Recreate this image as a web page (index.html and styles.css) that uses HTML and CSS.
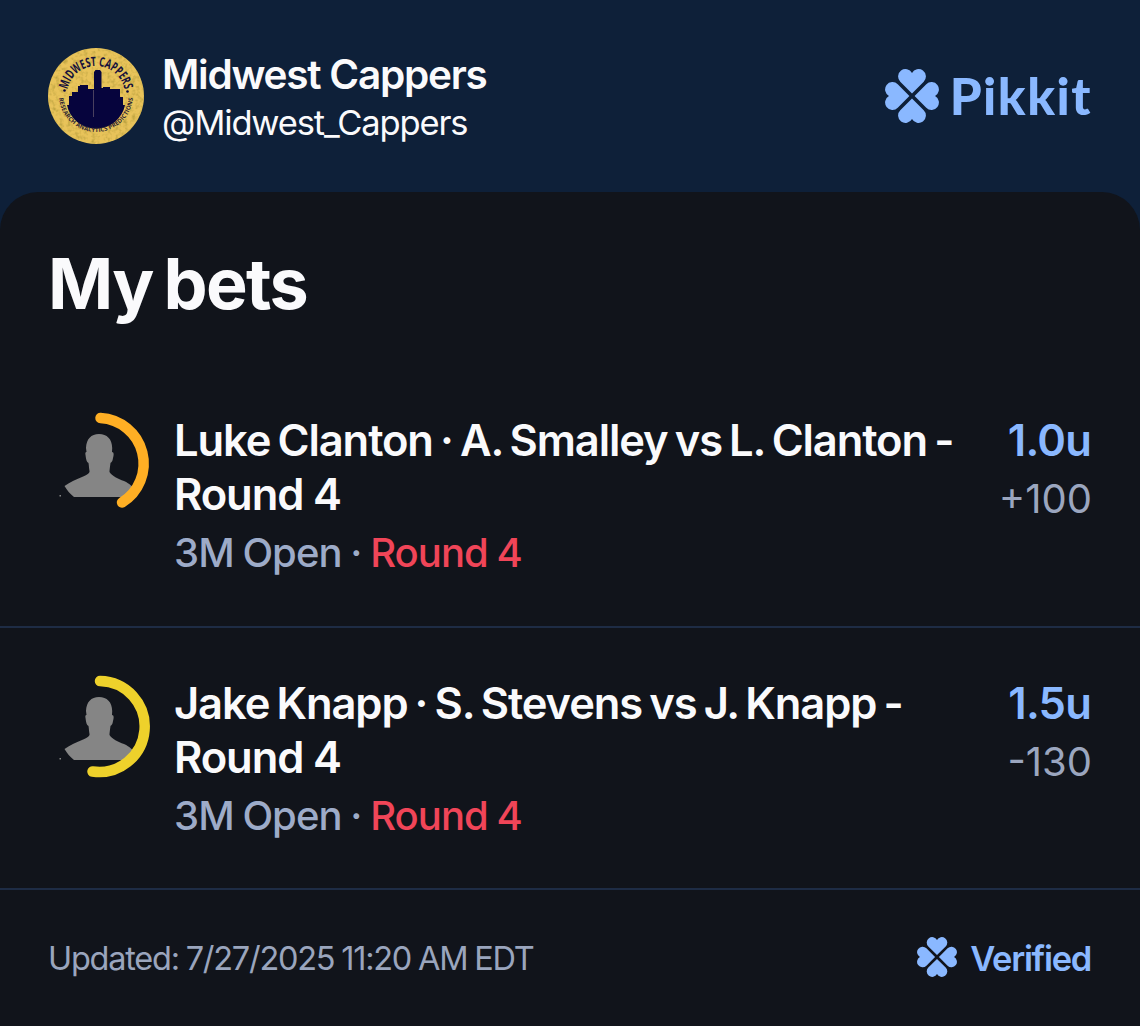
FILE: index.html
```html
<!DOCTYPE html>
<html lang="en">
<head>
    <meta charset="UTF-8">
    <meta name="viewport" content="width=device-width, initial-scale=1.0">
    <title>My bets</title>
    <link rel="stylesheet" href="styles.css">
</head>
<body>
    <!-- Shared shapes -->
    <svg class="defs" width="0" height="0">
        <symbol id="clover" viewBox="-27 -27 54 54">
            <g id="leaves">
                <path id="leaf" d="M0 -2.6L11.73 -14.27A7.4 7.4 0 1 0 0 -23.04A7.4 7.4 0 1 0 -11.73 -14.27Z"/>
                <use href="#leaf" transform="rotate(90)"/>
                <use href="#leaf" transform="rotate(180)"/>
                <use href="#leaf" transform="rotate(270)"/>
            </g>
        </symbol>
        <symbol id="person" viewBox="0 0 104 104">
            <path d="M49 22C57 22 62 27 62.200 36L62 40C64 40 64 43 63 46C62.500 50 61 50.500 60.500 51C60 55 59.500 58 59.500 60C62 64 68 67 74 69C80 72 83 75 85 77C82 81 78 84 76 85H24C20 82 17 78 14.500 74C20 70 27 67 32 65C37 63 40 61 39.500 59C39 57 39 54 38.500 51C36.500 50 36 47 35.500 43C35 40 36 40 36.500 40L36 36C36.500 27 41 22 49 22Z"/>
            <rect x="9.500" y="83" width="1.500" height="1.500"/>
        </symbol>
    </svg>

    <div class="header">
        <svg class="avatar" viewBox="0 0 96 96">
            <defs>
                <filter id="grain" x="0" y="0" width="100%" height="100%">
                    <feTurbulence type="fractalNoise" baseFrequency="0.25" numOctaves="3" seed="4"/>
                    <feColorMatrix values="0 0 0 0 0.5  0 0 0 0 0.36  0 0 0 0 0.05  2.2 0 0 0 -1"/>
                    <feComposite in2="SourceGraphic" operator="in"/>
                </filter>
                <path id="arcTop" d="M19 47A28.500 28.500 0 0 1 77 47"/>
                <path id="arcBottom" d="M11 47A37 37 0 0 0 85 47"/>
            </defs>
            <circle cx="48" cy="48" r="48" fill="#e8c35a"/>
            <circle cx="48" cy="48" r="48" filter="url(#grain)"/>
            <path class="skyline" d="M19 57H21V48H24V44H30V38H32V37H40V41H46V24L47.500 22H52L53.500 24V40H55V39H62V41H72V49H75V57H77A29.500 29 0 0 1 19 57Z"/>
            <path d="M45.500 42V69" stroke="#5a5068" stroke-width="0.800"/>
            <circle class="skyline" cx="16.500" cy="42.500" r="1.300"/>
            <circle class="skyline" cx="79.500" cy="43.500" r="1.300"/>
            <text class="coin-name"><textPath href="#arcTop" startOffset="50%" text-anchor="middle" textLength="80" lengthAdjust="spacingAndGlyphs">MIDWEST CAPPERS</textPath></text>
            <text class="coin-motto"><textPath href="#arcBottom" startOffset="50%" text-anchor="middle" textLength="110">RESEARCH ANALYTICS PREDICTIONS</textPath></text>
        </svg>
        <div class="user">
            <div class="user-name">Midwest Cappers</div>
            <div class="user-handle">@Midwest_Cappers</div>
        </div>
        <div class="brand">
            <svg class="brand-icon"><use href="#clover"/></svg>
            <span class="brand-name">Pikkit</span>
        </div>
    </div>

    <div class="card">
        <h1>My bets</h1>

        <div class="bet">
            <svg class="player" viewBox="0 0 104 104">
                <use href="#person"/>
                <path class="ring orange" d="M50.500 6A45.700 45.700 0 0 1 72 90.500"/>
            </svg>
            <div class="bet-info">
                <div class="bet-title"><span class="pick">Luke Clanton · A. Smalley vs L. Clanton -</span><br>Round 4</div>
                <div class="bet-event">3M Open · <span class="round">Round 4</span></div>
            </div>
            <div class="bet-stake">
                <div class="units">1.0u</div>
                <div class="odds">+100</div>
            </div>
        </div>

        <div class="bet last">
            <svg class="player" viewBox="0 0 104 104">
                <use href="#person"/>
                <path class="ring yellow" d="M50 6A45.500 45.500 0 1 1 42.500 96.500"/>
            </svg>
            <div class="bet-info">
                <div class="bet-title"><span class="pick">Jake Knapp · S. Stevens vs J. Knapp -</span><br>Round 4</div>
                <div class="bet-event">3M Open · <span class="round">Round 4</span></div>
            </div>
            <div class="bet-stake">
                <div class="units">1.5u</div>
                <div class="odds">-130</div>
            </div>
        </div>

        <div class="footer">
            <div class="updated">Updated: 7/27/2025 11:20 AM EDT</div>
            <div class="verified">
                <svg class="verified-icon"><use href="#clover"/></svg>
                <span>Verified</span>
            </div>
        </div>
    </div>
</body>
</html>
```
FILE: styles.css
```css
* {
    box-sizing: border-box;
}
body {
    font-family: Inter, 'Liberation Sans', sans-serif;
    background-color: #0e2039;
    color: #fafafc;
    margin: 0;
    height: 1026px;
    display: flex;
    flex-direction: column;
    white-space: nowrap;
    overflow: hidden;
}
svg {
    display: block;
    flex-shrink: 0;
}
.defs {
    position: absolute;
}
.header {
    display: flex;
    flex-shrink: 0;
    height: 192px;
    padding: 48px 49px 0 48px;
}
.avatar {
    width: 96px;
    height: 96px;
}
.skyline {
    fill: #06043d;
}
.coin-name {
    font-family: 'Open Sans', sans-serif;
    font-size: 13px;
    font-weight: 700;
    fill: #14103c;
}
.coin-motto {
    font-family: 'Open Sans', sans-serif;
    font-size: 6px;
    font-weight: 700;
    fill: #2d2433;
}
.user {
    margin-left: 18px;
    padding-top: 2px;
}
.user-name {
    font-size: 40.500px;
    line-height: 50px;
    font-weight: 600;
    letter-spacing: -1.250px;
}
.user-handle {
    font-size: 34.500px;
    line-height: 45px;
    letter-spacing: -1.150px;
}
.brand {
    display: flex;
    margin-left: auto;
    height: 96px;
    align-items: center;
    color: #8ab8ff;
}
.brand-icon {
    width: 54px;
    height: 54px;
    margin-top: -1px;
    fill: #8ab8ff;
}
.brand-name {
    font-family: Lato, sans-serif;
    font-size: 51px;
    line-height: 60px;
    font-weight: 900;
    letter-spacing: 1.500px;
    margin-left: 11px;
    margin-right: -1px;
}
.card {
    flex: 1;
    background-color: #11141b;
    border-radius: 38px 38px 0 0;
}
h1 {
    margin: 0;
    height: 173px;
    padding: 47px 48px 0;
    font-size: 70px;
    line-height: 90px;
    font-weight: 700;
    letter-spacing: -1.700px;
    word-spacing: -4px;
}
.bet {
    display: flex;
    height: 263px;
    padding: 48px 49px 0 50px;
    border-bottom: 2px solid #1e2c45;
}
.last {
    height: 262px;
}
.player {
    width: 104px;
    height: 104px;
    margin-top: -1px;
    fill: #858585;
}
.ring {
    fill: none;
    stroke-width: 10.500;
    stroke-linecap: round;
}
.orange {
    stroke: #ffaf24;
}
.yellow {
    stroke: #eed12b;
}
.bet-info {
    margin-left: 20px;
}
.bet-title {
    font-size: 43.500px;
    line-height: 54px;
    font-weight: 600;
    letter-spacing: -1.100px;
}
.pick {
    word-spacing: -2.700px;
}
.bet-event {
    margin-top: 5px;
    font-size: 40px;
    line-height: 54px;
    font-weight: 500;
    letter-spacing: -0.950px;
    word-spacing: -1px;
    color: #9dabc8;
}
.round {
    color: #f04558;
}
.bet-stake {
    margin-left: auto;
    text-align: right;
}
.units {
    font-size: 43.500px;
    line-height: 54px;
    font-weight: 600;
    letter-spacing: -0.800px;
    color: #8ab8ff;
}
.odds {
    margin-top: 5px;
    margin-right: -1px;
    font-size: 40px;
    line-height: 54px;
    color: #9ba6bf;
}
.footer {
    display: flex;
    justify-content: space-between;
    align-items: center;
    height: 136px;
    padding: 0 49px 0 48px;
}
.updated {
    font-size: 32.500px;
    letter-spacing: -1.250px;
    word-spacing: -1px;
    color: #9aa5bd;
}
.verified {
    display: flex;
    align-items: center;
    gap: 13px;
    font-size: 34.500px;
    font-weight: 600;
    letter-spacing: -1.300px;
    color: #8ab8ff;
}
.verified-icon {
    width: 40px;
    height: 40px;
    margin-top: -2px;
    fill: #8ab8ff;
}
```
